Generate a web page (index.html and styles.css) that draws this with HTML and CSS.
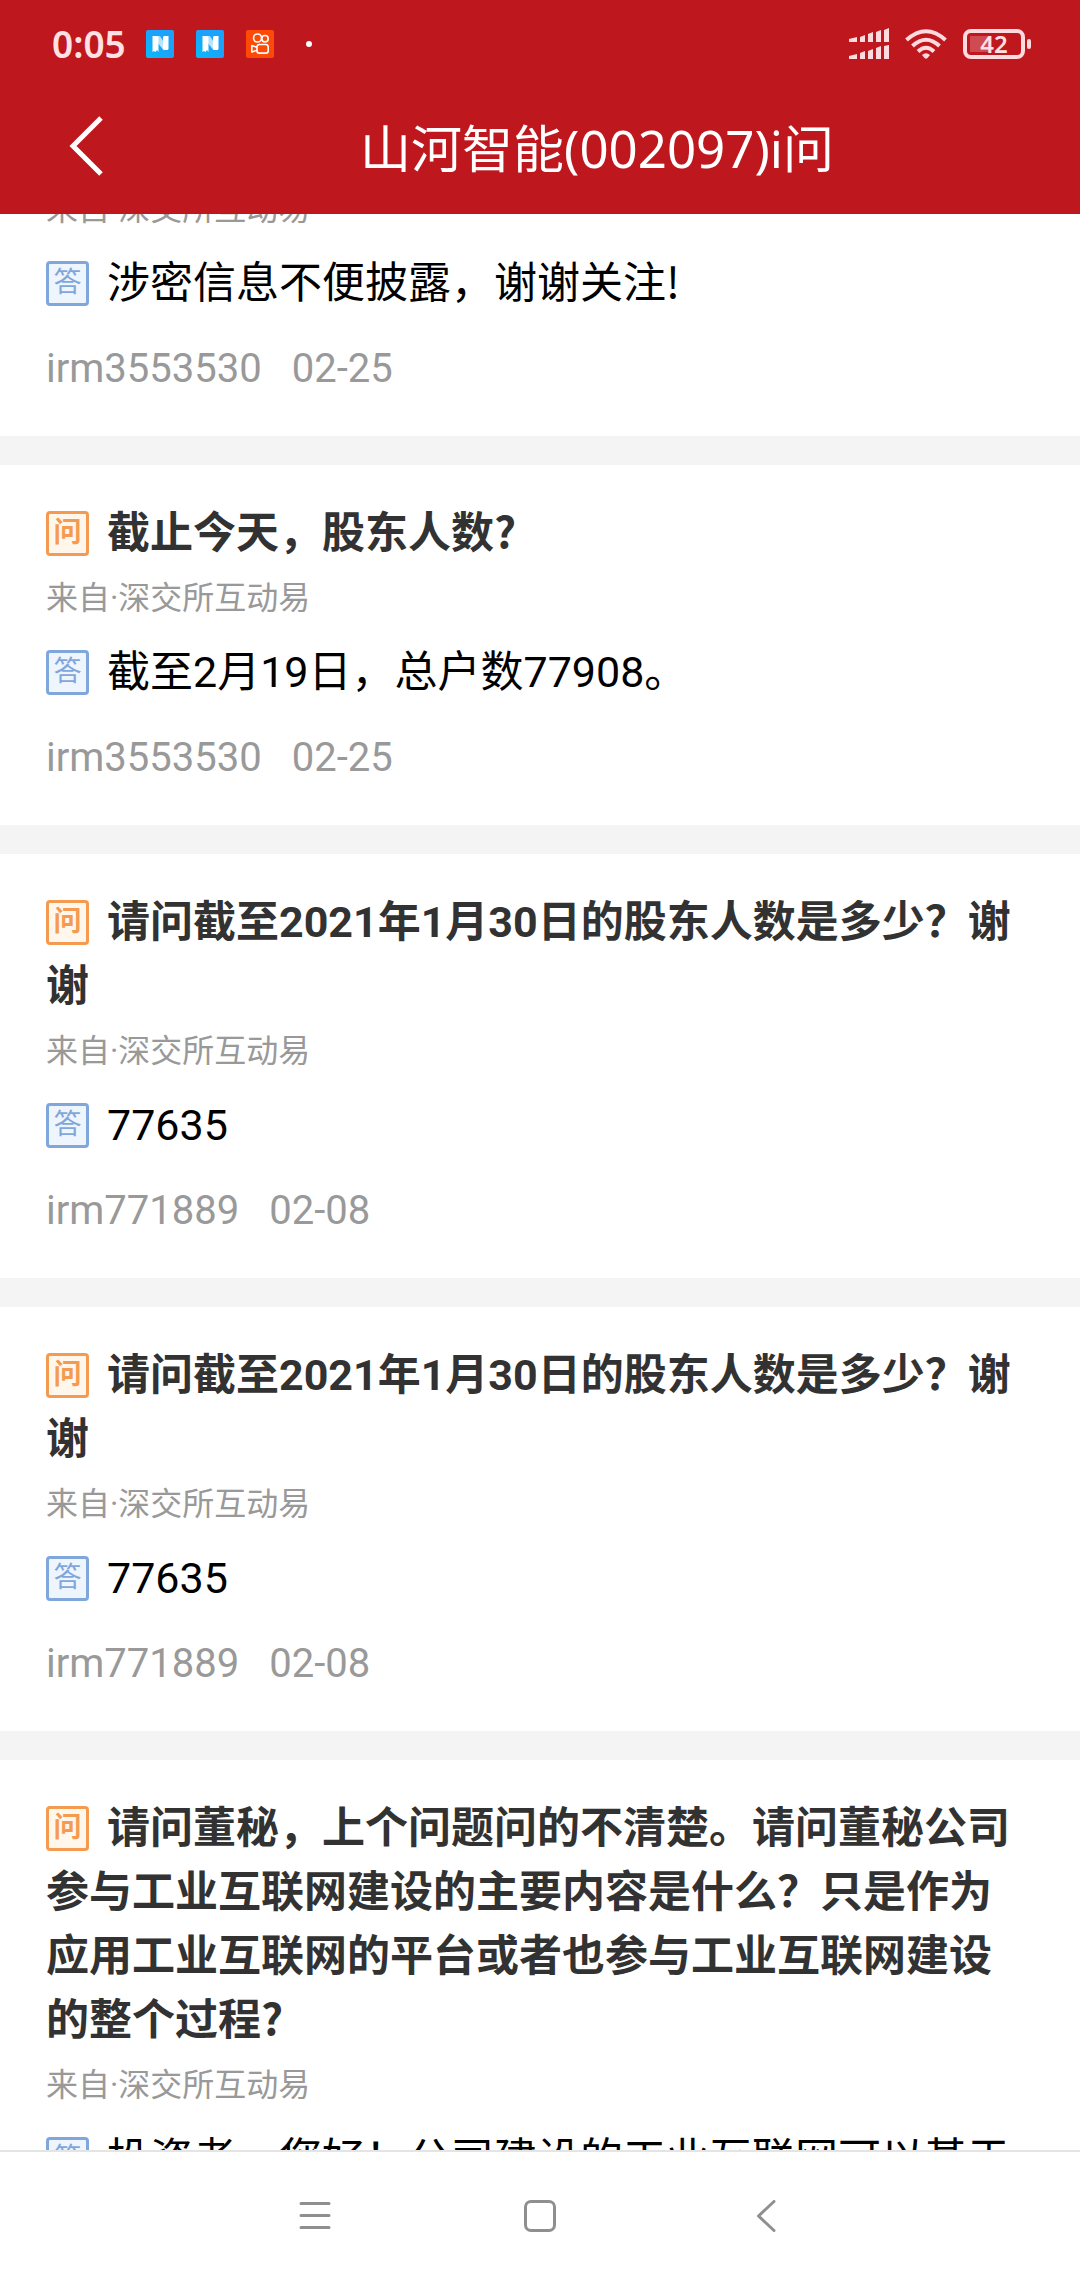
FILE: index.html
```html
<!DOCTYPE html>
<html lang="zh-CN">
<head>
<meta charset="utf-8">
<meta name="viewport" content="width=device-width, initial-scale=1">
<title>山河智能(002097)i问</title>
<link rel="stylesheet" href="styles.css">
</head>
<body>
<div class="app">
  <header class="top">
    <div class="status">
      <span class="clock">0:05</span>
      <svg class="app-icon" viewBox="0 0 28 28" aria-hidden="true">
        <defs>
          <linearGradient id="sky" x1="0" y1="1" x2="1" y2="0"><stop offset="0" stop-color="#06bdf8"/><stop offset=".5" stop-color="#1ba3fb"/></linearGradient>
          <linearGradient id="fold" x1="0" y1="0" x2="1" y2="1"><stop offset="0" stop-color="#fff" stop-opacity=".6"/><stop offset="1" stop-color="#fff" stop-opacity=".8"/></linearGradient>
        </defs>
        <rect width="28" height="28" rx="2" fill="url(#sky)"/>
        <path d="M11 6h3l5 8v6h-1.500L11 12z" fill="url(#fold)"/>
        <path d="M6.500 6h4.500l1.500 1v15l-1.500-2-1.500 2-1.500-1-1.500 1zM18 6h4.500v13l-1 1H18l-1-1V7z" fill="#fff"/>
      </svg>
      <svg class="app-icon" viewBox="0 0 28 28" aria-hidden="true">
        <rect width="28" height="28" rx="2" fill="url(#sky)"/>
        <path d="M11 6h3l5 8v6h-1.500L11 12z" fill="url(#fold)"/>
        <path d="M6.500 6h4.500l1.500 1v15l-1.500-2-1.500 2-1.500-1-1.500 1zM18 6h4.500v13l-1 1H18l-1-1V7z" fill="#fff"/>
      </svg>
      <svg class="app-icon" viewBox="0 0 28 28" aria-hidden="true">
        <rect width="28" height="28" rx="2" fill="#ff4906"/>
        <g fill="none" stroke="#fff" stroke-width="1.6"><circle cx="11.5" cy="8" r="4"/><circle cx="19" cy="8.7" r="3.2"/><rect x="11" y="14.5" width="11.2" height="8.6" rx="2.4"/><path d="M11 17.3l-5.2-1.7v6.4l5.2-1.7" stroke-linejoin="round"/></g>
      </svg>
      <span class="more-dot"></span>
      <span class="spacer"></span>
      <svg class="signal" viewBox="0 0 41 32" aria-hidden="true"><path fill="#ffdade" d="M0 11l8-2v5H0zM11 9l5-2v7h-5zM19 6l5-2v10h-5zM27 4l5-2v12h-5zM35 2l5-2v14h-5zM0 28l8-2v5H0zM11 25l5-2v8h-5zM19 23l5-2v10h-5zM27 20l5-2v13h-5zM35 18l5-1v14h-5z"/></svg>
      <svg class="wifi" viewBox="0 0 42 31" aria-hidden="true"><g fill="none" stroke="#ffdade" stroke-width="4"><path d="M1.500 11Q21-6.500 40.500 11"/><path d="M7.500 17Q21 4.500 34.500 17"/><path d="M13 22.500Q21 15 29 22.500"/></g><path d="M17 26q4-3.500 8 0l-2.500 3q-1.500 1.500-3 0z" fill="#ffdade"/></svg>
      <span class="battery"><span class="battery-level">42</span></span>
    </div>
    <div class="bar">
      <button class="back" type="button" aria-label="返回">
        <svg viewBox="0 0 36 60" width="36" height="60" aria-hidden="true"><path d="M32 2L4 30l28 28" fill="none" stroke="#fff" stroke-width="5"/></svg>
      </button>
      <h1 class="title">山河智能(002097)i问</h1>
    </div>
  </header>

  <main class="feed">
    <article class="card card-scrolled">
      <p class="source">来自·深交所互动易</p>
      <p class="answer"><span class="badge badge-a">答</span>涉密信息不便披露，谢谢关注<span class="mark">!</span></p>
      <p class="meta"><span>irm3553530</span><time>02-25</time></p>
    </article>
    <article class="card">
      <h2 class="question"><span class="badge badge-q">问</span>截止今天，股东人数<span class="mark">?</span></h2>
      <p class="source">来自·深交所互动易</p>
      <p class="answer"><span class="badge badge-a">答</span>截至2月19日，总户数77908。</p>
      <p class="meta"><span>irm3553530</span><time>02-25</time></p>
    </article>
    <article class="card">
      <h2 class="question"><span class="badge badge-q">问</span>请问截至2021年1月30日的股东人数是多少？谢谢</h2>
      <p class="source">来自·深交所互动易</p>
      <p class="answer"><span class="badge badge-a">答</span>77635</p>
      <p class="meta"><span>irm771889</span><time>02-08</time></p>
    </article>
    <article class="card">
      <h2 class="question"><span class="badge badge-q">问</span>请问截至2021年1月30日的股东人数是多少？谢谢</h2>
      <p class="source">来自·深交所互动易</p>
      <p class="answer"><span class="badge badge-a">答</span>77635</p>
      <p class="meta"><span>irm771889</span><time>02-08</time></p>
    </article>
    <article class="card">
      <h2 class="question"><span class="badge badge-q">问</span>请问董秘，上个问题问的不清楚。请问董秘公司参与工业互联网建设的主要内容是什么？只是作为应用工业互联网的平台或者也参与工业互联网建设的整个过程<span class="mark">?</span></h2>
      <p class="source">来自·深交所互动易</p>
      <p class="answer"><span class="badge badge-a">答</span>投资者，您好！公司建设的工业互联网可以基于</p>
    </article>
  </main>

  <nav class="system-nav">
    <button type="button" aria-label="最近任务"><svg viewBox="0 0 32 32" width="32" height="32" aria-hidden="true"><path d="M2 3.500h28M2 15.500h28M2 27.500h28" stroke="#8f8f8f" stroke-width="3" stroke-linecap="round"/></svg></button>
    <button type="button" aria-label="主屏幕"><svg viewBox="0 0 32 32" width="32" height="32" aria-hidden="true"><rect x="1.500" y="1.500" width="29" height="29" rx="5.500" fill="none" stroke="#8f8f8f" stroke-width="3"/></svg></button>
    <button type="button" aria-label="返回上一页"><svg viewBox="0 0 32 32" width="32" height="32" aria-hidden="true"><path d="M25 1.500L9.500 16 25 30.500" fill="none" stroke="#8f8f8f" stroke-width="3" stroke-linecap="round" stroke-linejoin="round"/></svg></button>
  </nav>
</div>
</body>
</html>
```

FILE: styles.css
```css
* {
  box-sizing: border-box;
}

body,
h1,
h2,
p {
  margin: 0;
}

body {
  background: #fff;
  font-family: Roboto, "Noto Sans CJK SC", sans-serif;
}

button {
  padding: 0;
  border: 0;
  background: none;
  cursor: pointer;
}

svg {
  display: block;
}

.app {
  display: flex;
  flex-direction: column;
  height: 100vh;
}

/* Status bar and title bar */
.top {
  flex: none;
  background: #be171d;
  color: #fff;
}

.status {
  display: flex;
  align-items: center;
  height: 88px;
  padding: 0 49px 0 52px;
}

.clock {
  margin-right: 20px;
  color: #ffe0e3;
  font: 600 37px/40px "Noto Sans", sans-serif;
}

.app-icon {
  width: 28px;
  height: 28px;
  margin-right: 22px;
}

.more-dot {
  width: 6px;
  height: 6px;
  margin-left: 10px;
  border-radius: 50%;
  background: #fff;
}

.spacer {
  flex: 1;
}

.signal {
  width: 41px;
  height: 32px;
}

.wifi {
  width: 42px;
  height: 31px;
  margin: 0 16px 0 15px;
}

.battery {
  display: flex;
  align-items: center;
}

.battery::after {
  content: "";
  width: 4px;
  height: 10px;
  margin-left: 2px;
  border-radius: 2px;
  background: #ffdade;
}

.battery-level {
  width: 62px;
  height: 30px;
  border: 4px solid #ffdade;
  border-radius: 8px;
  background: linear-gradient(90deg, #cf4b52 21px, transparent 21px) no-repeat 3px 3px / 48px 16px;
  color: #ffe0e3;
  font: 600 24px/22px "Noto Sans", sans-serif;
  text-align: center;
}

.bar {
  display: flex;
  align-items: center;
  height: 126px;
  padding-bottom: 6px;
}

.back {
  display: flex;
  width: 114px;
  height: 116px;
  padding-left: 69px;
  align-items: center;
  align-self: flex-start;
}

.title {
  flex: 1;
  font: 400 51px/70px "Noto Sans", "Noto Sans CJK SC", sans-serif;
  text-align: center;
}

/* Question and answer list */
.feed {
  flex: 1;
  min-height: 0;
  overflow-y: auto;
  scrollbar-width: none;
}

.card {
  padding: 36px 46px 43px;
  border-bottom: 29px solid #f4f4f4;
}

/* The list rests part-way through the first entry */
.card-scrolled {
  margin-top: -40px;
  padding-top: 0;
}

.question,
.answer {
  font-size: 43px;
  line-height: 64px;
}

.question {
  color: #323232;
  font-weight: 700;
}

.answer {
  margin-top: 20px;
  color: #000;
}

/* Half-width punctuation drawn in the Chinese face */
.mark {
  font-family: "Noto Sans CJK SC", sans-serif;
  line-height: 1;
}

.source {
  margin-top: 11px;
  color: #999;
  font-size: 32px;
  line-height: 44px;
}

.card-scrolled .source {
  margin-top: 13px;
}

.meta {
  display: flex;
  gap: 30px;
  margin-top: 30px;
  color: #999;
  font-size: 40px;
  line-height: 48px;
}

.badge {
  display: inline-block;
  width: 43px;
  height: 45px;
  margin-right: 18px;
  border: 3px solid;
  border-radius: 4px;
  font-size: 28px;
  line-height: 38px;
  text-align: center;
  vertical-align: 6px;
}

.badge-q {
  border-color: #f49b51;
  background: #fff7ec;
  color: #f49b51;
}

.badge-a {
  border-color: #7fa7dc;
  background: #eff5fd;
  color: #7fa7dc;
}

/* System navigation */
.system-nav {
  display: grid;
  flex: none;
  grid-template-columns: repeat(3, 225px);
  justify-content: center;
  height: 130px;
  border-top: 2px solid #e4e4e4;
}

.system-nav button {
  display: grid;
  place-items: center;
}
```
